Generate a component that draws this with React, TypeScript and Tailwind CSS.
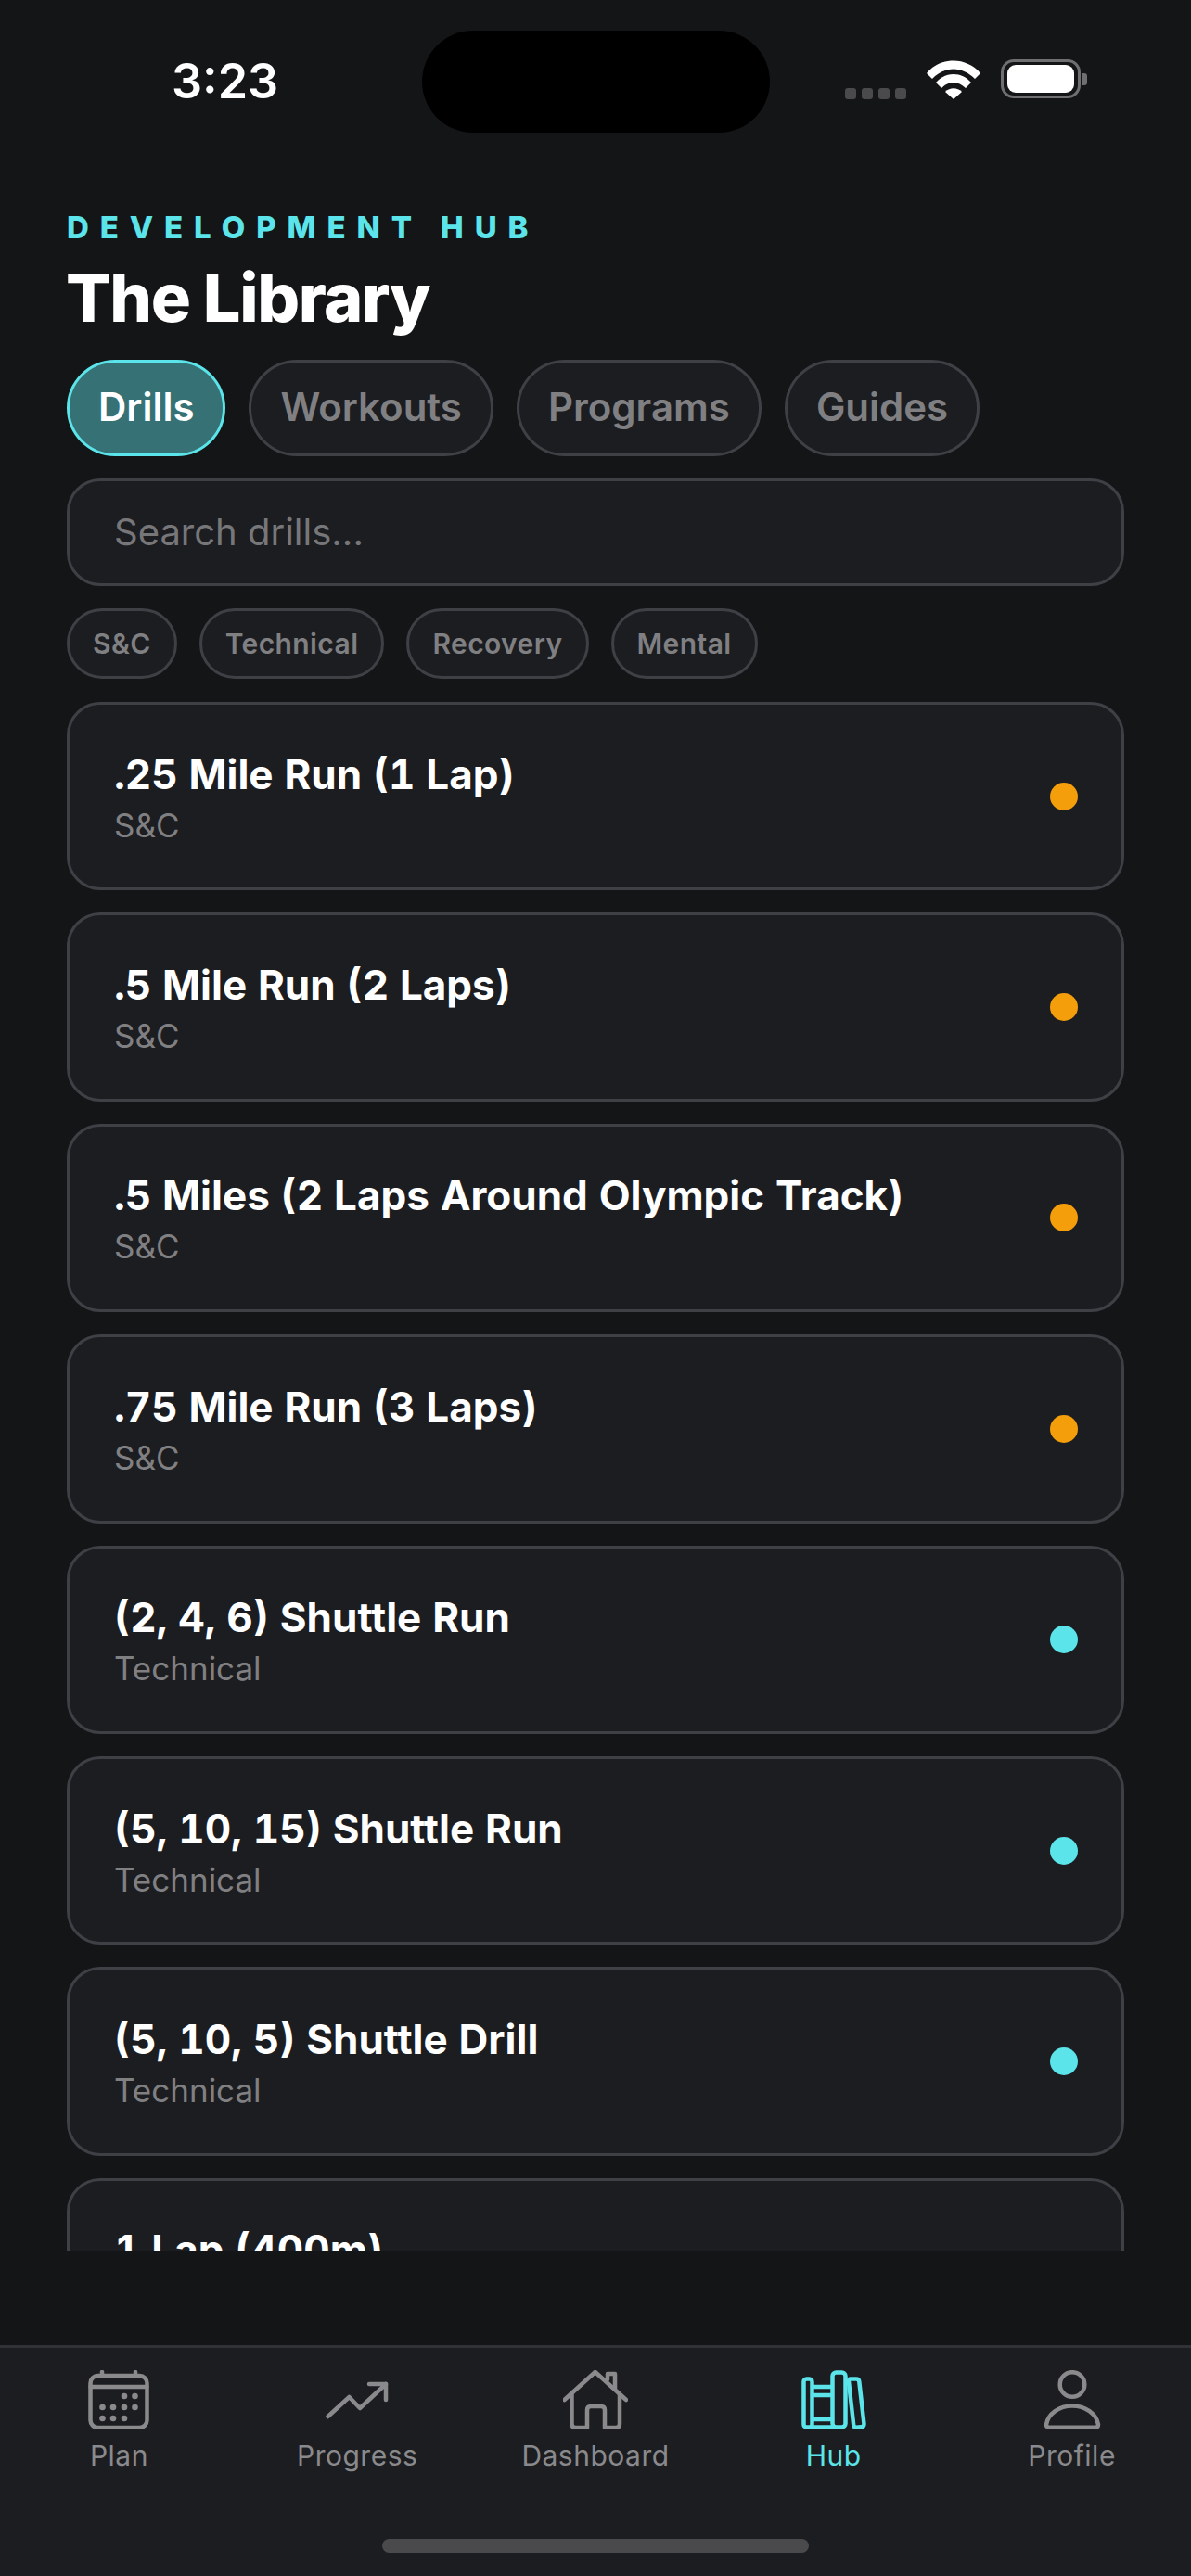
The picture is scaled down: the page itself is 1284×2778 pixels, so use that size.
import type { ReactNode } from "react";

const drills = [
  { name: ".25 Mile Run (1 Lap)", cat: "S&C" },
  { name: ".5 Mile Run (2 Laps)", cat: "S&C" },
  { name: ".5 Miles (2 Laps Around Olympic Track)", cat: "S&C" },
  { name: ".75 Mile Run (3 Laps)", cat: "S&C" },
  { name: "(2, 4, 6) Shuttle Run", cat: "Technical" },
  { name: "(5, 10, 15) Shuttle Run", cat: "Technical" },
  { name: "(5, 10, 5) Shuttle Drill", cat: "Technical" },
  { name: "1 Lap (400m)", cat: "S&C" },
];

function StatusBar() {
  return (
    <div className="flex h-[144px] shrink-0 items-start pl-[185px]">
      <div className="mt-[59px] w-[270px] text-[52px] leading-[58px] font-semibold text-white">3:23</div>
      <div className="mt-[33px] h-[110px] w-[375px] rounded-[55px] bg-black" />
      <div className="mt-[95px] ml-[81px] flex w-[66px] gap-[6px]">
        <span className="h-[12px] w-[12px] rounded-[3px] bg-[#4a4a4c]" />
        <span className="h-[12px] w-[12px] rounded-[3px] bg-[#4a4a4c]" />
        <span className="h-[12px] w-[12px] rounded-[3px] bg-[#4a4a4c]" />
        <span className="h-[12px] w-[12px] rounded-[3px] bg-[#4a4a4c]" />
      </div>
      <svg className="mt-[64px] ml-[21px]" width="60" height="44" viewBox="0 0 60 44" fill="#fff">
        <path d="M1 15 C16 -3 44 -3 59 15 L53 21 C39 7 21 7 7 21 Z" />
        <path d="M11 25 C21 13 39 13 49 25 L43 31 C35 23 25 23 17 31 Z" />
        <path d="M21 35 C26 30 34 30 39 35 L30 43 Z" />
      </svg>
      <div className="mt-[64px] ml-[21px] flex h-[42px] w-[86px] items-center justify-center rounded-[14px] border-[3px] border-[#6f6f71]">
        <div className="h-[30px] w-[72px] rounded-[9px] bg-white" />
      </div>
      <div className="mt-[79px] ml-[2px] h-[13px] w-[5px] rounded-r-[3px] bg-[#6f6f71]" />
    </div>
  );
}

function Tab({ label, active }: { label: string; active?: boolean }) {
  return (
    <div
      className={
        active
          ? "flex h-[104px] items-center rounded-full border-[3px] border-[#5be5ea] bg-[#367175] px-[31px] pb-[3px] text-[42px] font-semibold text-white"
          : "flex h-[104px] items-center rounded-full border-[3px] border-[#3e4045] bg-[#1c1d21] px-[31px] pb-[3px] text-[42px] font-semibold text-[#808083]"
      }
    >
      {label}
    </div>
  );
}

function Chip({ label }: { label: string }) {
  return (
    <div className="flex h-[76px] items-center rounded-full border-[3px] border-[#3e4045] bg-[#1c1d21] px-[25px] text-[30px] font-semibold tracking-[0.4px] text-[#808083]">
      {label}
    </div>
  );
}

function DrillCard({ name, cat }: { name: string; cat: string }) {
  return (
    <div className="flex h-[203.4px] shrink-0 items-center justify-between rounded-[36px] border-[3px] border-[#3e4045] bg-[#1c1d21] pr-[47px] pl-[48px]">
      <div className="pt-[3px]">
        <div className="text-[44px] leading-[54px] font-bold text-white tabular-nums">{name}</div>
        <div className="mt-[5px] text-[35px] leading-[46px] text-[#808083]">{cat}</div>
      </div>
      <span className={cat === "S&C" ? "h-[30px] w-[30px] rounded-full bg-[#f59e0b]" : "h-[30px] w-[30px] rounded-full bg-[#5be5ea]"} />
    </div>
  );
}

function PlanIcon() {
  return (
    <svg width="66" height="64" viewBox="0 0 66 64" fill="none" stroke="currentColor" strokeWidth="4.5" strokeLinecap="round">
      <rect x="2.500" y="6" width="61" height="56" rx="8" />
      <path d="M2.500 18 H63.500 M15 2 V6 M51 2 V6" />
      <g fill="currentColor" stroke="none">
        <circle cx="39" cy="28" r="3.300" />
        <circle cx="50.500" cy="28" r="3.300" />
        <circle cx="15.500" cy="40" r="3.300" />
        <circle cx="27" cy="40" r="3.300" />
        <circle cx="39" cy="40" r="3.300" />
        <circle cx="50.500" cy="40" r="3.300" />
        <circle cx="15.500" cy="52" r="3.300" />
        <circle cx="27" cy="52" r="3.300" />
        <circle cx="39" cy="52" r="3.300" />
      </g>
    </svg>
  );
}

function ProgressIcon() {
  return (
    <svg width="68" height="64" viewBox="0 0 68 64" fill="none" stroke="currentColor" strokeWidth="4.5" strokeLinecap="round" strokeLinejoin="round">
      <path d="M2.500 50 L25.500 29 L37 41 L65 15" />
      <path d="M47 15 H65 V32" />
    </svg>
  );
}

function HomeIcon() {
  return (
    <svg width="70" height="64" viewBox="0 0 70 64" fill="none" stroke="currentColor" strokeWidth="4.5" strokeLinecap="round" strokeLinejoin="round">
      <path d="M1.500 32 L34.700 2 L68 32" />
      <path d="M9.500 26 V58 Q9.500 62 13.500 62 H26 V43 Q26 39 30 39 H41 Q45 39 45 43 V62 H57 Q61 62 61 58 V26" />
      <path d="M48 10 V4 H56 V20" />
    </svg>
  );
}

function BooksIcon() {
  return (
    <svg width="70" height="64" viewBox="0 0 70 64" fill="none" stroke="currentColor" strokeWidth="4.5" strokeLinecap="round" strokeLinejoin="round">
      <rect x="2.500" y="9.500" width="9" height="52" rx="3" />
      <path d="M12 18 H33 M12 27 H33 M12 53 H33 M12 61.500 H33" />
      <rect x="33.500" y="2.500" width="14" height="59" rx="4" />
      <path d="M53 9.500 L59 9.500 Q62 9.500 62.300 12.500 L67.500 58 Q67.500 61 64.500 61.300 L59 61.800 Q56.500 61.800 56.200 59 L51 12.500 Q51 9.500 53 9.500 Z" />
    </svg>
  );
}

function ProfileIcon() {
  return (
    <svg width="62" height="64" viewBox="0 0 62 64" fill="none" stroke="currentColor" strokeWidth="4.5" strokeLinecap="round" strokeLinejoin="round">
      <circle cx="31" cy="15.500" r="13.300" />
      <path d="M3 58.500 C5 47 17 38.500 31 38.500 C45 38.500 57 47 59 58.500 Q59 61.700 56 61.700 H6 Q3 61.700 3 58.500 Z" />
    </svg>
  );
}

function NavItem({ label, active, children }: { label: string; active?: boolean; children: ReactNode }) {
  return (
    <div className={active ? "flex flex-1 flex-col items-center text-[#5be5ea]" : "flex flex-1 flex-col items-center text-[#8a8a8c]"}>
      <div className="flex h-[64px] items-center justify-center">{children}</div>
      <div className="mt-[10px] text-[30px] leading-[36px] tracking-[0.5px]">{label}</div>
    </div>
  );
}

export default function App() {
  return (
    <div className="flex h-[2778px] w-[1284px] flex-col overflow-hidden bg-[#141517] font-['Inter','Noto_Sans',sans-serif]">
      <StatusBar />
      <div className="flex min-h-0 flex-1 flex-col px-[72px]">
        <div className="mt-[81px] text-[33px] leading-[40px] font-extrabold tracking-[11.900px] text-[#5be5ea]">DEVELOPMENT HUB</div>
        <h1 className="mt-[14px] -ml-[1px] text-[72px] leading-[84px] font-extrabold tracking-[-1.400px] text-white">The Library</h1>
        <div className="mt-[25px] flex gap-[25px]">
          <Tab label="Drills" active />
          <Tab label="Workouts" />
          <Tab label="Programs" />
          <Tab label="Guides" />
        </div>
        <div className="mt-[24px] flex h-[116px] shrink-0 items-center rounded-[36px] border-[3px] border-[#3e4045] bg-[#1c1d21] px-[48px] text-[40px] text-[#77777a]">
          Search drills...
        </div>
        <div className="mt-[24px] flex gap-[24px]">
          <Chip label="S&C" />
          <Chip label="Technical" />
          <Chip label="Recovery" />
          <Chip label="Mental" />
        </div>
        <div className="mt-[25px] flex h-[1671px] flex-col gap-[24px] overflow-hidden">
          {drills.map((d) => (
            <DrillCard key={d.name} name={d.name} cat={d.cat} />
          ))}
        </div>
      </div>
      <div className="h-[249px] shrink-0 border-t-[3px] border-[#303236] bg-[#1c1d21] pt-[24px]">
        <div className="flex">
          <NavItem label="Plan"><PlanIcon /></NavItem>
          <NavItem label="Progress"><ProgressIcon /></NavItem>
          <NavItem label="Dashboard"><HomeIcon /></NavItem>
          <NavItem label="Hub" active><BooksIcon /></NavItem>
          <NavItem label="Profile"><ProfileIcon /></NavItem>
        </div>
        <div className="mx-auto mt-[72px] h-[15px] w-[460px] rounded-full bg-[#4a4a4c]" />
      </div>
    </div>
  );
}
